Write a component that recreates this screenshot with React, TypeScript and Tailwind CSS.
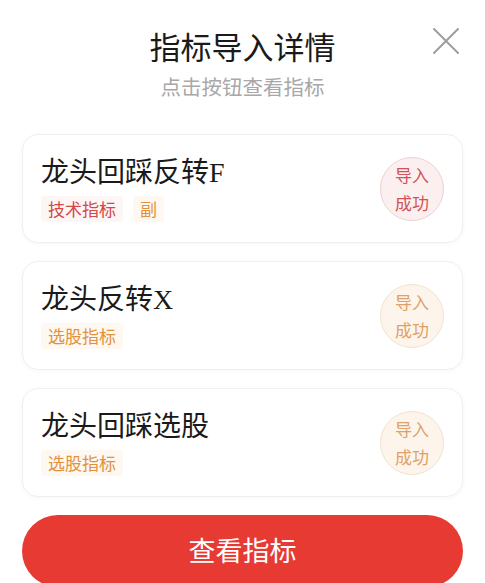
const items = [
  { name: "龙头回踩反转F", tags: [{ t: "技术指标", red: true }, { t: "副", red: false }], red: true },
  { name: "龙头反转X", tags: [{ t: "选股指标", red: false }], red: false },
  { name: "龙头回踩选股", tags: [{ t: "选股指标", red: false }], red: false },
];

export default function App() {
  return (
    <div
      className="h-[583px] w-[485px] overflow-hidden bg-white"
      style={{ fontFamily: '"Noto Sans CJK SC", "Noto Sans", sans-serif' }}
    >
      <div className="relative flex flex-col items-center pt-[25px]">
        <div className="text-[31px] leading-[42px] text-[#1a1a1a]">指标导入详情</div>
        <div className="mt-[6px] text-[20.5px] leading-[26px] text-[#a8a8a8]">点击按钮查看指标</div>
        <svg className="absolute right-[25px] top-[27px]" width="28" height="28" viewBox="0 0 28 28">
          <path d="M2 2 L26 26 M26 2 L2 26" stroke="#9e9e9e" strokeWidth="2" strokeLinecap="round" />
        </svg>
      </div>

      <div className="mt-[35px] flex flex-col gap-[18px] px-[22px]">
        {items.map((it) => (
          <div
            key={it.name}
            className="flex h-[109px] items-center justify-between rounded-[16px] border border-[#efefef] pl-[18px] pr-[18px] shadow-[0_1px_4px_rgba(0,0,0,0.04)]"
          >
            <div className="flex flex-col">
              <div
                className="text-[28px] leading-[36px] text-[#1a1a1a]"
                style={{ fontFamily: '"Liberation Serif", "Noto Sans CJK SC", serif' }}
              >
                {it.name}
              </div>
              <div className="mt-[5px] flex gap-[10px]">
                {it.tags.map((tg) => (
                  <span
                    key={tg.t}
                    className={
                      tg.red
                        ? "rounded-[4px] bg-[#fef5f5] px-[7px] text-[17px] leading-[26px] text-[#d2474a]"
                        : "rounded-[4px] bg-[#fef8f1] px-[7px] text-[17px] leading-[26px] text-[#e2913f]"
                    }
                  >
                    {tg.t}
                  </span>
                ))}
              </div>
            </div>
            <div
              className={
                it.red
                  ? "flex h-[64px] w-[64px] flex-col items-center justify-center rounded-full border border-[#ecd3d3] bg-[#fcefef] text-[17px] leading-[28px] text-[#cf5357]"
                  : "flex h-[64px] w-[64px] flex-col items-center justify-center rounded-full border border-[#f2e2cf] bg-[#fdf5ec] text-[17px] leading-[28px] text-[#e0a066]"
              }
            >
              <span>导入</span>
              <span>成功</span>
            </div>
          </div>
        ))}
      </div>

      <div className="mx-[22px] mt-[18px] flex h-[72px] items-center justify-center rounded-full bg-[#e73a33] pb-[2px] text-[27px] text-white">
        查看指标
      </div>
    </div>
  );
}
